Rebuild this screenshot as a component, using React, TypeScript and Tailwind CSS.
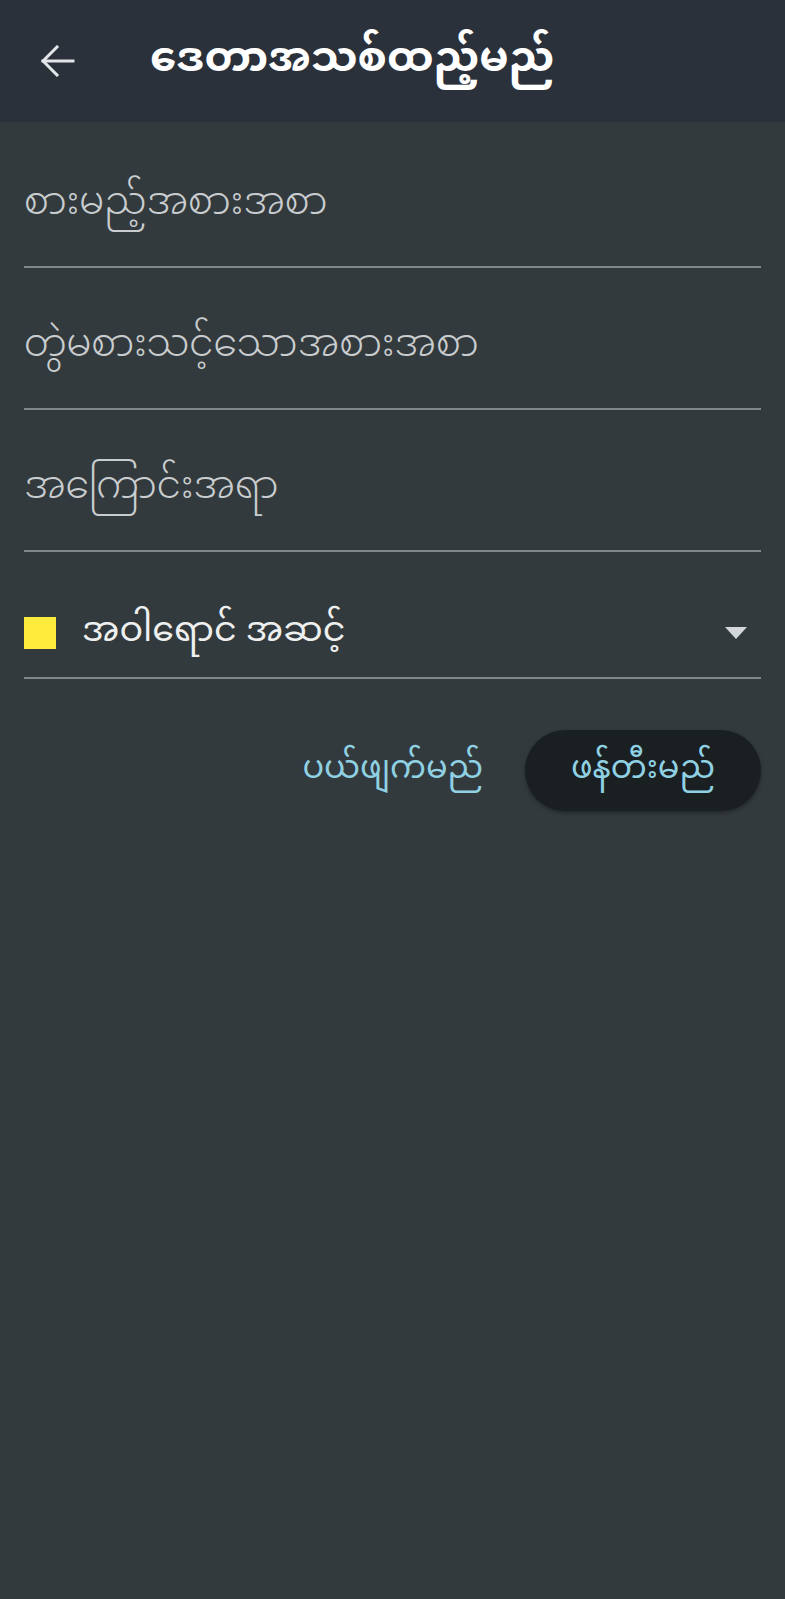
import React from "react";

const font = { fontFamily: '"Noto Sans Myanmar", "Noto Sans", "Padauk", "Myanmar Text", sans-serif' };

function Field({ label, first }: { label: string; first?: boolean }) {
  return (
    <div className={first ? "h-[146px] flex flex-col" : "h-[142px] flex flex-col"}>
      <div className="flex-1 flex items-end pb-[30px]">
        <span className="text-[38px] leading-[60px] text-[#c9cdcf] font-light">{label}</span>
      </div>
      <div className="h-[2px] bg-[#80878b]" />
    </div>
  );
}

export default function App() {
  return (
    <div className="w-[785px] h-[1599px] bg-[#333a3d] flex flex-col" style={font}>
      <header className="h-[122px] bg-[#2a313a] flex items-center shrink-0">
        <div className="w-[150px] pl-[41px] flex items-center">
          <svg width="34" height="32" viewBox="0 0 34 32" fill="none" stroke="#e3e6e8" strokeWidth="3" strokeLinecap="square">
            <path d="M2 16 H32" />
            <path d="M16 2 L2 16 L16 30" strokeLinejoin="miter" />
          </svg>
        </div>
        <h1 className="text-[42px] font-bold text-white leading-none">ဒေတာအသစ်ထည့်မည်</h1>
      </header>
      <main className="px-[24px] flex flex-col">
        <Field label="စားမည့်အစားအစာ" first />
        <Field label="တွဲမစားသင့်သောအစားအစာ" />
        <Field label="အကြောင်းအရာ" />
        <div className="h-[127px] flex flex-col">
          <div className="flex-1 flex items-end pb-[14px]">
            <div className="flex items-center w-full">
              <div className="w-[32px] h-[32px] bg-[#ffeb3b] shrink-0" />
              <span className="ml-[26px] text-[35px] leading-[60px] text-[#eef0f0] font-normal">အဝါရောင် အဆင့်</span>
              <div className="flex-1" />
              <svg width="22" height="12" viewBox="0 0 22 12" className="mr-[14px]">
                <path d="M0 0 H22 L11 12 Z" fill="#d4d7d9" />
              </svg>
            </div>
          </div>
          <div className="h-[2px] bg-[#80878b]" />
        </div>
        <div className="flex justify-end items-center mt-[51px]">
          <span className="text-[32px] text-[#8fd1e3] mr-[42px] leading-[60px]">ပယ်ဖျက်မည်</span>
          <div className="h-[81px] w-[236px] rounded-full bg-[#1a1f22] flex items-center justify-center shadow-[0_2px_4px_rgba(0,0,0,0.35)]">
            <span className="text-[32px] text-[#8fd1e3] leading-[60px]">ဖန်တီးမည်</span>
          </div>
        </div>
      </main>
    </div>
  );
}
